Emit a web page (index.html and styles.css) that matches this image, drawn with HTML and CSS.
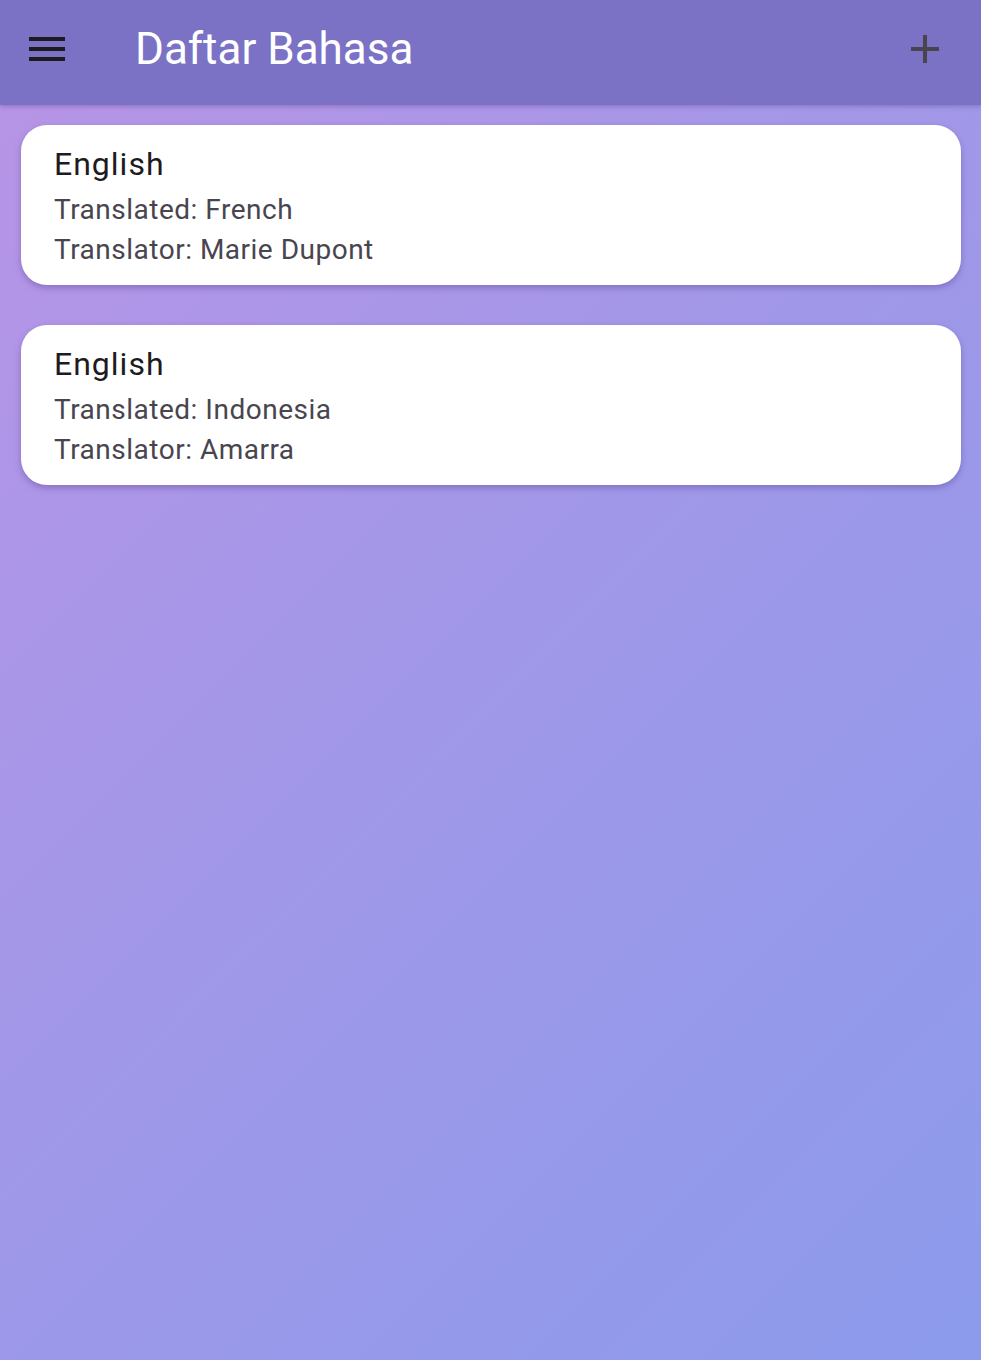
FILE: index.html
```html
<!DOCTYPE html>
<html lang="id">
<head>
<meta charset="utf-8">
<title>Daftar Bahasa</title>
<link rel="stylesheet" href="styles.css">
</head>
<body>
<div class="screen">
  <header class="appbar">
    <button class="icon-btn menu" aria-label="Menu">
      <svg width="48" height="48" viewBox="0 0 24 24"><path d="M3 18h18v-2H3v2zm0-5h18v-2H3v2zm0-7v2h18V6H3z" fill="#1d1b20"/></svg>
    </button>
    <h1 class="title">Daftar Bahasa</h1>
    <button class="icon-btn add" aria-label="Tambah">
      <svg width="48" height="48" viewBox="0 0 24 24"><path d="M19 13h-6v6h-2v-6H5v-2h6V5h2v6h6v2z" fill="#49454f"/></svg>
    </button>
  </header>
  <main class="list">
    <div class="card">
      <div class="card-title">English</div>
      <div class="card-sub">Translated: French</div>
      <div class="card-sub">Translator: Marie Dupont</div>
    </div>
    <div class="card">
      <div class="card-title">English</div>
      <div class="card-sub">Translated: Indonesia</div>
      <div class="card-sub">Translator: Amarra</div>
    </div>
  </main>
</div>
</body>
</html>
```
FILE: styles.css
```css
html, body {
  margin: 0;
  padding: 0;
}
body {
  font-family: Roboto, "Noto Sans", sans-serif;
}
.screen {
  width: 981px;
  height: 1360px;
  background: linear-gradient(135deg, #b994e6 0%, #a297e8 45%, #8c9bec 100%);
  overflow: hidden;
}
.appbar {
  height: 105px;
  background: #7b72c6;
  display: flex;
  align-items: center;
  padding: 0 32px 7px 23px;
  box-sizing: border-box;
  box-shadow: 0 2px 4px rgba(60, 40, 120, 0.25);
}
.icon-btn {
  background: none;
  border: 0;
  padding: 0;
  width: 48px;
  height: 48px;
  display: flex;
  align-items: center;
  justify-content: center;
  flex: none;
}
.icon-btn.add {
  margin-left: auto;
}
.title {
  margin: 0 0 0 64px;
  font-weight: 400;
  font-size: 44px;
  line-height: 56px;
  color: #ffffff;
  letter-spacing: 0;
}
.list {
  display: flex;
  flex-direction: column;
  gap: 40px;
  padding: 20px 20px 0 21px;
}
.card {
  background: #ffffff;
  border-radius: 26px;
  height: 160px;
  box-sizing: border-box;
  padding: 15px 33px;
  box-shadow: 0 3px 6px rgba(70, 50, 130, 0.35);
}
.card-title {
  font-size: 32px;
  color: #1d1b20;
  letter-spacing: 1px;
  line-height: 48px;
  margin-bottom: 2px;
}
.card-sub {
  font-size: 28px;
  color: #49454f;
  letter-spacing: 0.5px;
  line-height: 40px;
}
```
